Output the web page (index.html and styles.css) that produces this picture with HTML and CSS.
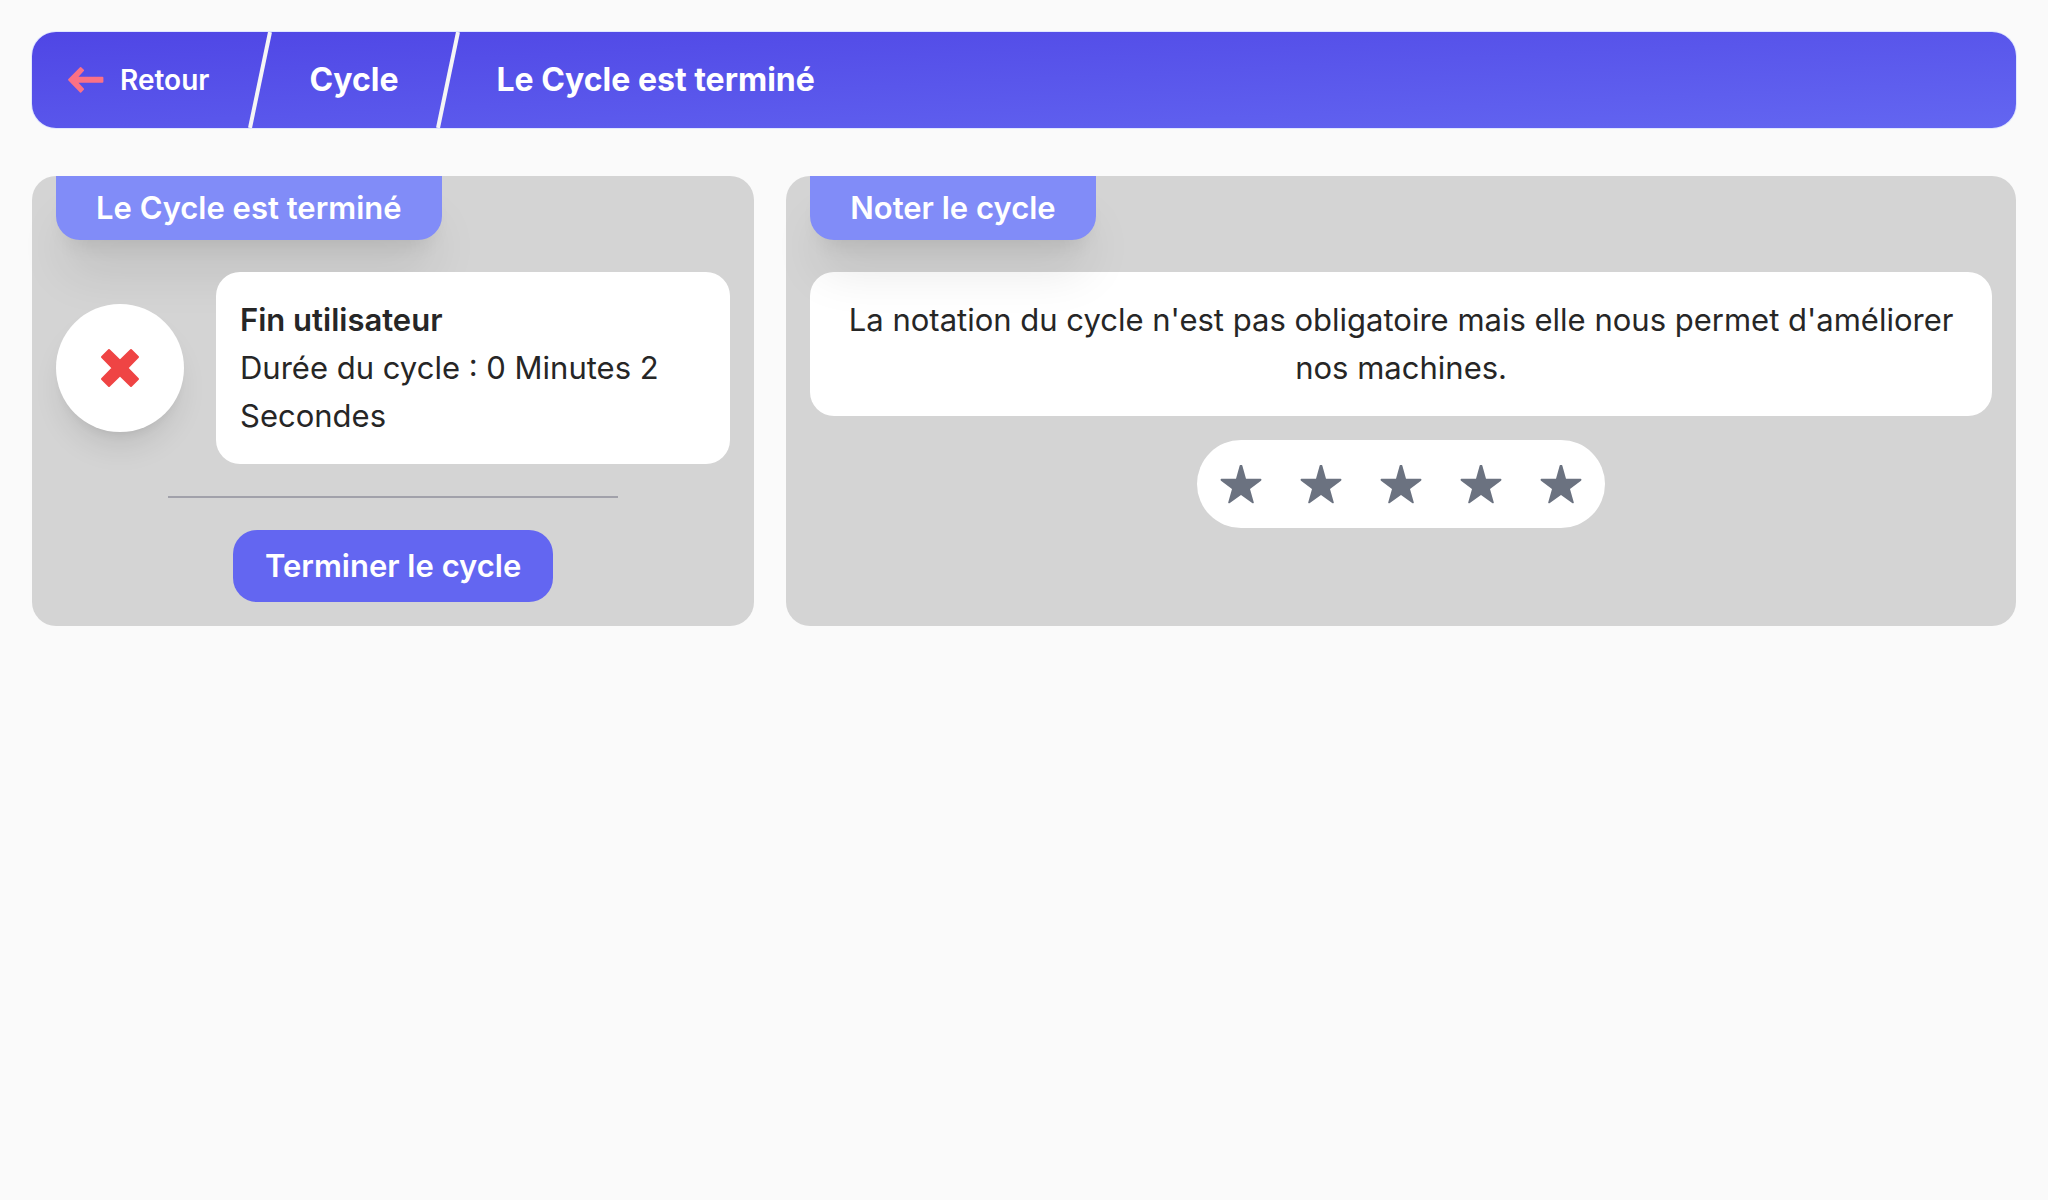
FILE: index.html
```html
<!DOCTYPE html>
<html lang="fr">
<head>
<meta charset="utf-8">
<meta name="viewport" content="width=device-width, initial-scale=1">
<title>Le Cycle est terminé</title>
<link rel="stylesheet" href="styles.css">
</head>
<body>
<svg class="sprite" aria-hidden="true">
  <symbol id="star" viewBox="0 0 40 40"><path d="M19.3 1h1.400q.4 0 .6.6L25 14.800H39.600q.8 0 .8.8v.5q0 .3-.4.6L29 25l3.800 13.400q.2.800-.6.800h-.7L20 31 8.500 39.200h-.7q-.8 0-.6-.8L11 25 0 16.700q-.4-.3-.4-.6v-.5q0-.8.8-.8H15L18.700 1.600q.2-.6.6-.6z"/></symbol>
</svg>
<nav class="topbar" aria-label="Fil d'Ariane">
  <a class="back" href="#">
    <svg class="back-icon" viewBox="0 0 36 28" aria-hidden="true"><path d="M.4 13.100L12 1.200q.6-.6 1.200 0l2.600 2.600q.6.600 0 1.200L10.500 10.800H34.400q1 0 1 1v4q0 1-1 1H10.500L15.800 22.600q.6.600 0 1.200L13.200 26.400q-.6.600-1.200 0L.4 14.500q-.6-.7 0-1.400z" fill="currentColor"/></svg>
    Retour
  </a>
  <svg class="slash" viewBox="0 0 24 96" aria-hidden="true"><path d="M22 0L2 96"/></svg>
  <a class="crumb" href="#">Cycle</a>
  <svg class="slash" viewBox="0 0 24 96" aria-hidden="true"><path d="M22 0L2 96"/></svg>
  <span class="crumb" aria-current="page">Le Cycle est terminé</span>
</nav>
<main class="cards">
  <section class="card">
    <h2 class="tab">Le Cycle est terminé</h2>
    <div class="result">
      <div class="badge">
        <svg viewBox="0 0 40 40" aria-hidden="true"><path d="M9 2L20 12.700 31 2 38 9 27.300 20 38 31 31 38 20 27.300 9 38 2 31 12.700 20 2 9z"/></svg>
      </div>
      <div class="panel">
        <p class="strong">Fin utilisateur</p>
        <p>Durée du cycle : 0 Minutes 2 Secondes</p>
      </div>
    </div>
    <hr class="rule">
    <button class="finish" type="button">Terminer le cycle</button>
  </section>
  <section class="card">
    <h2 class="tab">Noter le cycle</h2>
    <p class="panel note">La notation du cycle n'est pas obligatoire mais elle nous permet d'améliorer nos machines.</p>
    <div class="stars" role="group" aria-label="Note">
      <button type="button" aria-label="1 étoile"><svg><use href="#star"/></svg></button>
      <button type="button" aria-label="2 étoiles"><svg><use href="#star"/></svg></button>
      <button type="button" aria-label="3 étoiles"><svg><use href="#star"/></svg></button>
      <button type="button" aria-label="4 étoiles"><svg><use href="#star"/></svg></button>
      <button type="button" aria-label="5 étoiles"><svg><use href="#star"/></svg></button>
    </div>
  </section>
</main>
</body>
</html>
```
FILE: styles.css
```css
* {
  box-sizing: border-box;
}

body {
  margin: 0;
  padding: 32px;
  background: #fafafa;
  color: #262626;
  font-family: Inter, "Liberation Sans", sans-serif;
  font-size: 31px;
  line-height: 48px;
}

h2,
p {
  margin: 0;
}

button {
  padding: 0;
  border: 0;
  font: inherit;
  cursor: pointer;
}

.sprite {
  position: absolute;
  width: 0;
  height: 0;
}

.topbar {
  display: flex;
  align-items: center;
  height: 96px;
  border-radius: 24px;
  background: linear-gradient(to bottom right, #4f46e5, #6366f1);
  box-shadow: 0 0 0 1px #e0e7ff;
  color: #fff;
  font-weight: 700;
}

.back,
.crumb {
  color: inherit;
  text-decoration: none;
}

.back {
  display: flex;
  align-items: center;
  gap: 16px;
  padding: 0 39px 0 36px;
  font-size: 28px;
  font-weight: 600;
}

.back-icon {
  width: 36px;
  height: 28px;
  color: #fb7185;
}

.crumb {
  padding: 0 37px;
  font-size: 32px;
}

.slash {
  flex: none;
  width: 24px;
  height: 96px;
  stroke: #f5f5f5;
  stroke-width: 4px;
}

.cards {
  display: grid;
  grid-template-columns: minmax(0, 37fr) minmax(0, 63fr);
  gap: 32px;
  margin-top: 48px;
}

.card {
  display: flex;
  flex-direction: column;
  align-items: center;
  padding: 0 24px 24px;
  border-radius: 24px;
  background: #d4d4d4;
}

.tab {
  position: relative;
  align-self: flex-start;
  margin-bottom: 32px;
  padding: 8px 40px;
  border-radius: 0 0 24px 24px;
  background: #818cf8;
  box-shadow: 0 40px 50px -10px rgb(0 0 0 / 10%), 0 16px 20px -12px rgb(0 0 0 / 10%);
  color: #fff;
  font-size: 31px;
  font-weight: 600;
}

.result {
  position: relative;
  display: flex;
  align-items: center;
  gap: 32px;
  width: 100%;
}

.badge {
  display: grid;
  flex: none;
  place-items: center;
  width: 128px;
  height: 128px;
  border-radius: 50%;
  background: #fff;
  box-shadow: 0 20px 30px -6px rgb(0 0 0 / 10%), 0 8px 12px -8px rgb(0 0 0 / 10%);
}

.badge svg {
  width: 40px;
  height: 40px;
  fill: #ef4444;
  stroke: #ef4444;
  stroke-width: 2px;
  stroke-linejoin: round;
}

.panel {
  flex: 1;
  padding: 24px;
  border-radius: 24px;
  background: #fff;
}

.strong {
  font-weight: 600;
}

.rule {
  width: 66.66%;
  height: 2px;
  margin: 32px 0;
  border: 0;
  background: #a1a1aa;
}

.finish {
  padding: 12px 32px;
  border-radius: 24px;
  background: #6366f1;
  color: #fff;
  font-weight: 600;
}

.note {
  flex: none;
  width: 100%;
  text-align: center;
}

.stars {
  display: flex;
  gap: 40px;
  margin-top: 24px;
  padding: 24px;
  border-radius: 44px;
  background: #fff;
}

.stars button {
  width: 40px;
  height: 40px;
  background: none;
}

.stars svg {
  display: block;
  width: 40px;
  height: 40px;
  overflow: visible;
  fill: #6b7280;
}

#star {
  overflow: visible;
}
```
